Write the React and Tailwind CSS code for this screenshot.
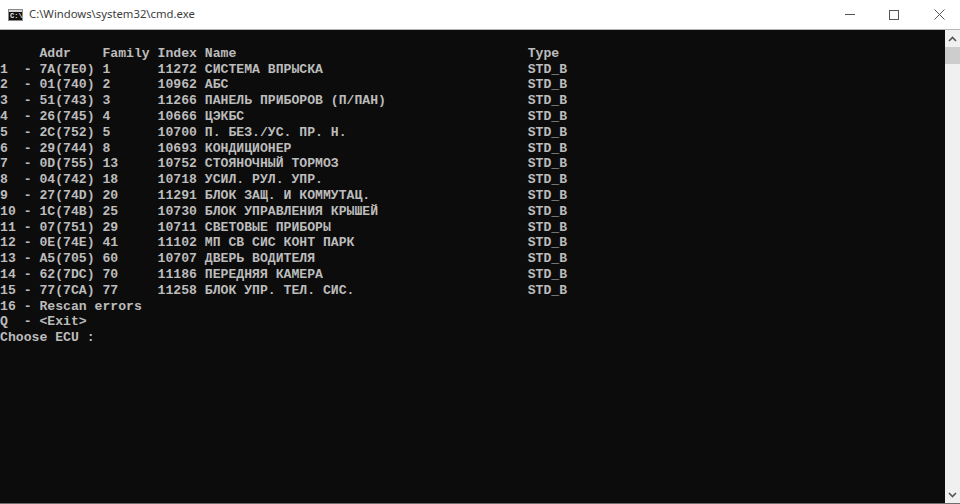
import React from "react";

const ecus = [
  ["1", "7A(7E0)", "1", "11272", "СИСТЕМА ВПРЫСКА"],
  ["2", "01(740)", "2", "10962", "АБС"],
  ["3", "51(743)", "3", "11266", "ПАНЕЛЬ ПРИБОРОВ (П/ПАН)"],
  ["4", "26(745)", "4", "10666", "ЦЭКБС"],
  ["5", "2C(752)", "5", "10700", "П. БЕЗ./УС. ПР. Н."],
  ["6", "29(744)", "8", "10693", "КОНДИЦИОНЕР"],
  ["7", "0D(755)", "13", "10752", "СТОЯНОЧНЫЙ ТОРМОЗ"],
  ["8", "04(742)", "18", "10718", "УСИЛ. РУЛ. УПР."],
  ["9", "27(74D)", "20", "11291", "БЛОК ЗАЩ. И КОММУТАЦ."],
  ["10", "1C(74B)", "25", "10730", "БЛОК УПРАВЛЕНИЯ КРЫШЕЙ"],
  ["11", "07(751)", "29", "10711", "СВЕТОВЫЕ ПРИБОРЫ"],
  ["12", "0E(74E)", "41", "11102", "МП СВ СИС КОНТ ПАРК"],
  ["13", "A5(705)", "60", "10707", "ДВЕРЬ ВОДИТЕЛЯ"],
  ["14", "62(7DC)", "70", "11186", "ПЕРЕДНЯЯ КАМЕРА"],
  ["15", "77(7CA)", "77", "11258", "БЛОК УПР. ТЕЛ. СИС."],
];

const lines = [
  "",
  "     Addr    Family Index Name".padEnd(67) + "Type",
  ...ecus.map(
    ([n, addr, family, index, name]) =>
      `${n.padEnd(3)}- ${addr} ${family.padEnd(6)} ${index} ${name.padEnd(40)} STD_B`
  ),
  "16 - Rescan errors",
  "Q  - <Exit>",
  "Choose ECU :",
];

const CmdIcon = () => (
  <div className="flex h-[12px] w-[15px] flex-col border border-[#8a8a8a] bg-[#111]">
    <div className="h-[2px] bg-[#d8d8d8]" />
    <span className="pl-px font-['Liberation_Mono',monospace] text-[7px] font-bold leading-[8px] text-[#e8e8e8]">
      C:\
    </span>
  </div>
);

export default function App() {
  return (
    <div className="flex h-[504px] w-[960px] flex-col overflow-hidden bg-white">
      <div className="flex h-[30px] shrink-0 items-center border-b border-[#b4b4b4] pl-2">
        <CmdIcon />
        <span className="ml-[6px] flex-1 font-['Noto_Sans',sans-serif] text-[11.3px] text-[#3c3c3c]">
          C:\Windows\system32\cmd.exe
        </span>
        <div className="flex items-center">
          <div className="flex h-[28px] w-[40px] items-center justify-center">
            <div className="h-px w-[10px] bg-[#555]" />
          </div>
          <div className="flex h-[28px] w-[48px] items-center justify-center">
            <div className="h-[10px] w-[10px] border border-[#555]" />
          </div>
          <div className="flex h-[28px] w-[42px] items-center justify-center">
            <svg width="11" height="11" viewBox="0 0 11 11" stroke="#555" strokeWidth="1">
              <path d="M.5.5l10 10M10.5.5l-10 10" />
            </svg>
          </div>
        </div>
      </div>
      <div className="flex min-h-0 flex-1">
        <pre className="flex-1 overflow-hidden bg-[#0c0c0c] font-['Liberation_Mono',monospace] text-[13.13px] font-bold leading-[15.8px] text-[#bcbcbc]">
          {lines.join("\n")}
        </pre>
        <div className="flex w-[15px] shrink-0 flex-col bg-[#f0f0f0]">
          <div className="flex h-[17px] items-center justify-center">
            <svg width="9" height="6" viewBox="0 0 9 6" fill="none" stroke="#555" strokeWidth="1.6">
              <path d="M1 5l3.5-3.5L8 5" />
            </svg>
          </div>
          <div className="h-[17px] bg-[#cdcdcd]" />
          <div className="flex-1" />
          <div className="flex h-[17px] items-center justify-center">
            <svg width="9" height="6" viewBox="0 0 9 6" fill="none" stroke="#555" strokeWidth="1.6">
              <path d="M1 1l3.5 3.5L8 1" />
            </svg>
          </div>
        </div>
      </div>
      <div className="h-px shrink-0 bg-[#6e6e6e]" />
    </div>
  );
}
